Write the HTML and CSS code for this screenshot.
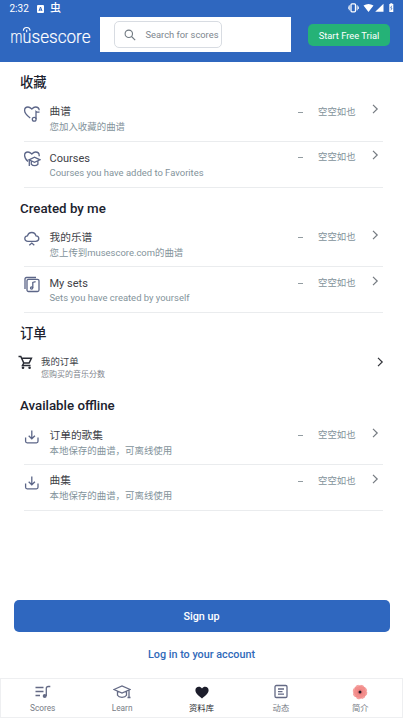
FILE: index.html
```html
<!DOCTYPE html>
<html lang="zh">
<head>
<meta charset="utf-8">
<meta name="viewport" content="width=device-width">
<title>Library</title>
<link rel="stylesheet" href="styles.css">
</head>
<body>
<svg class="defs" width="0" height="0">
  <defs>
    <symbol id="chev" viewBox="0 0 8 12"><path d="M2 1.800 6.200 6 2 10.200"/></symbol>
    <symbol id="heart-note" viewBox="0 0 18 18"><path d="M7.200 12.900C3.800 10.400 1.600 8 1.600 5.400 1.600 3.300 3 2 5 2c1.700 0 2.700 1 3.800 2C10 2.800 11 2 12.500 2c2 0 3.600 1.200 3.700 3.200M13 14V6.400c1 .8 2.200 1 3.500.5"/><circle cx="11.200" cy="14.200" r="1.900"/></symbol>
    <symbol id="heart-cap" viewBox="0 0 18 18"><path d="M5 11.500C3 9.600 1.600 7.700 1.600 5.400 1.600 3.300 3 2 5 2c1.700 0 2.700 1 3.800 2C10 2.800 11 2 12.500 2c2 0 3.700 1.300 3.700 3.400v.8M6 9.800l5.500-2.600L17 9.800l-5.500 2.500zM8.300 11v3.200c1.800 2 4.800 2 6.600 0V11M6.300 10v6"/></symbol>
    <symbol id="cloud" viewBox="0 0 18 18"><path d="M5 11.400c-2 0-3.200-1.200-3.200-2.800s1.100-2.600 2.700-2.700C5 3.800 6.700 2.500 8.800 2.500s3.700 1.300 4.200 3.400c1.700.1 2.800 1.200 2.800 2.700 0 1.600-1.200 2.800-3.200 2.800zM6.300 15.300l2.500-2.200 2.500 2.200"/></symbol>
    <symbol id="sets" viewBox="0 0 18 18"><rect x="4" y="3.300" width="12" height="12.200" rx="1.500"/><path d="M2 13V3q0-1.500 1.500-1.500H13M9.800 12V6.500l2.800-.8"/><circle cx="8.600" cy="12" r="1.100"/></symbol>
    <symbol id="download" viewBox="0 0 18 18"><path d="M2.600 9.500v3.800q0 1.500 1.500 1.500h9.400q1.500 0 1.500-1.500V9.500M8.800 2.500v8M5.700 7.800l3.100 3 3.100-3"/></symbol>
  </defs>
</svg>

<header class="top">
  <div class="status">
    <span class="clock">2:32</span>
    <svg class="st-a" width="7" height="8" viewBox="0 0 7 8"><rect width="7" height="8" rx="1" fill="#fff"/><path d="M2 6 3.500 2 5 6M2.500 5h2" stroke="#2f67bf" fill="none"/></svg>
    <span class="st-cjk">虫</span>
    <svg class="st-right" width="46" height="10" viewBox="0 0 46 10" fill="#fff">
      <rect x="3" y=".8" width="4.500" height="8" rx="1" fill="none" stroke="#fff" stroke-width="1.300"/>
      <path d="M1.300 2.300v5M9.200 2.300v5M.2 3.500v2.500M10.400 3.500v2.500" stroke="#fff" stroke-width=".9"/>
      <path d="M15.500 2.600q5-3.200 10 0l-5 6.400zM35.500.8v8h-8.300zM41.300 1h1v-.8h2V1h1v8h-4z"/>
      <path d="M43.800 2.700l-1.200 2.300h1.400l-1.100 2.300" stroke="#2f67bf" stroke-width=".7" fill="none"/>
    </svg>
  </div>
  <div class="bar">
    <svg class="logo" width="82" height="28" viewBox="0 0 82 28">
      <text y="18.500"><tspan x="-.5" textLength="11.800" lengthAdjust="spacingAndGlyphs">m</tspan><tspan x="11.400" textLength="8.800" lengthAdjust="spacingAndGlyphs">u</tspan><tspan x="20.500" textLength="59" lengthAdjust="spacingAndGlyphs">sescore</tspan></text>
      <path d="M12.400 6.800a3.300 3.300 0 0 1 6.600 0M15.700 5.800v2.400"/>
    </svg>
    <div class="search-wrap">
      <div class="search">
        <svg width="12" height="12" viewBox="0 0 12 12"><circle cx="4.800" cy="4.800" r="3.700"/><path d="m7.500 7.500 3.700 3.700"/></svg>
        <span>Search for scores</span>
      </div>
    </div>
    <button class="trial">Start Free Trial</button>
  </div>
</header>

<main>
  <section>
    <h2 class="cjk">收藏</h2>
    <div class="row">
      <svg class="ico"><use href="#heart-note"/></svg>
      <div class="txt"><div class="name">曲谱</div><div class="sub">您加入收藏的曲谱</div></div>
      <span class="dash"></span><span class="empty">空空如也</span><svg class="chev"><use href="#chev"/></svg>
    </div>
    <div class="row">
      <svg class="ico"><use href="#heart-cap"/></svg>
      <div class="txt"><div class="name en">Courses</div><div class="sub en">Courses you have added to Favorites</div></div>
      <span class="dash"></span><span class="empty">空空如也</span><svg class="chev"><use href="#chev"/></svg>
    </div>
  </section>
  <section>
    <h2>Created by me</h2>
    <div class="row">
      <svg class="ico"><use href="#cloud"/></svg>
      <div class="txt"><div class="name">我的乐谱</div><div class="sub">您上传到musescore.com的曲谱</div></div>
      <span class="dash"></span><span class="empty">空空如也</span><svg class="chev"><use href="#chev"/></svg>
    </div>
    <div class="row">
      <svg class="ico"><use href="#sets"/></svg>
      <div class="txt"><div class="name en">My sets</div><div class="sub en">Sets you have created by yourself</div></div>
      <span class="dash"></span><span class="empty">空空如也</span><svg class="chev"><use href="#chev"/></svg>
    </div>
  </section>
  <section class="orders">
    <h2 class="cjk">订单</h2>
    <div class="order">
      <svg class="cart" width="15" height="15" viewBox="0 0 15 15"><path d="M.5 1.500h2.300l3 6.500h5.300l2.300-4.800H3.700M5.800 8l-1.300 2.400h8"/><circle cx="5" cy="12.800" r="1.300"/><circle cx="11.600" cy="12.800" r="1.300"/></svg>
      <div class="txt"><div class="oname">我的订单</div><div class="osub">您购买的音乐分数</div></div>
      <svg class="chev dark"><use href="#chev"/></svg>
    </div>
  </section>
  <section>
    <h2 class="offline">Available offline</h2>
    <div class="row">
      <svg class="ico"><use href="#download"/></svg>
      <div class="txt"><div class="name">订单的歌集</div><div class="sub">本地保存的曲谱，可离线使用</div></div>
      <span class="dash"></span><span class="empty">空空如也</span><svg class="chev"><use href="#chev"/></svg>
    </div>
    <div class="row">
      <svg class="ico"><use href="#download"/></svg>
      <div class="txt"><div class="name">曲集</div><div class="sub">本地保存的曲谱，可离线使用</div></div>
      <span class="dash"></span><span class="empty">空空如也</span><svg class="chev"><use href="#chev"/></svg>
    </div>
  </section>
</main>

<footer>
  <button class="signup">Sign up</button>
  <a class="login">Log in to your account</a>
  <nav>
    <div class="tab"><svg viewBox="0 0 18 16"><path d="M1.500 3.500h8M1.500 7.500h8M1.500 11.500H6M12.300 12V4.500q0-2 2-2h2"/><circle class="fill" cx="10.700" cy="12" r="2"/></svg><span>Scores</span></div>
    <div class="tab"><svg viewBox="0 0 18 16"><path d="M1 5.500 9 2l8 3.500L9 9zM4.500 7.300v4c1.500 2.700 7.500 2.700 9 0v-4M16 6v7.500M14.500 13.500h3"/></svg><span>Learn</span></div>
    <div class="tab active"><svg viewBox="0 0 18 16"><path d="M9 14.500C5 11.200 2.400 9 2.400 6.200 2.400 4.200 3.900 2.700 5.800 2.700c1.300 0 2.500.6 3.200 1.700.7-1.100 1.900-1.700 3.200-1.700 1.900 0 3.400 1.500 3.400 3.500 0 2.800-2.600 5-6.600 8.300z"/></svg><span>资料库</span></div>
    <div class="tab"><svg viewBox="0 0 18 16"><rect x="3" y="1.500" width="12" height="12" rx="1.300"/><path d="M6 5h6M6 7.600h4.500M6 10.200h6"/></svg><span>动态</span></div>
    <div class="tab"><svg class="flower" viewBox="0 0 18 16"><circle cx="9" cy="8" r="6.800" fill="#f28d8b"/><circle cx="9" cy="8" r="6.500" fill="none" stroke="#f5a09e" stroke-width="1.600" stroke-dasharray="3 2.100"/><circle cx="9" cy="8" r="3" fill="#ee8081"/><circle cx="9" cy="8" r="1.500" fill="#251c2a"/></svg><span>简介</span></div>
  </nav>
</footer>
</body>
</html>
```
FILE: styles.css
```css
* { box-sizing: border-box; }
body {
  margin: 0;
  width: 403px;
  height: 718px;
  display: flex;
  flex-direction: column;
  overflow: hidden;
  background: #fff;
  font-family: Roboto, "Noto Sans CJK SC", sans-serif;
}
.defs { display: block; flex: none; }
button { border: 0; padding: 0; font-family: inherit; }
svg { display: block; flex: none; }

.top { height: 62px; background: #2f67bf; color: #fff; flex: none; }
.status { height: 17px; display: flex; align-items: center; padding: 0 9px 0 9.500px; }
.clock { font-size: 10px; line-height: 17px; width: 27.500px; }
.st-cjk { font-size: 11px; line-height: 17px; margin-left: 6px; font-weight: 500; }
.st-right { margin-left: auto; margin-top: -2px; }
.bar { display: flex; align-items: flex-start; }
.logo { margin: 7px 7px 0 11px; overflow: visible; }
.logo text { font-family: Roboto, sans-serif; font-weight: 300; font-size: 18px; fill: #fff; stroke: #fff; stroke-width: .15; }
.logo path { fill: none; stroke: #fff; stroke-width: 1.2; }
.search-wrap { width: 191px; height: 35px; background: #fff; padding: 4px 0 0 14px; }
.search {
  width: 108px; height: 27px;
  border: 1px solid #d8dce2; border-radius: 5px;
  display: flex; align-items: center; gap: 10px;
  padding-left: 8.500px;
  font-size: 9.350px; color: #7d868e; white-space: nowrap;
}
.search svg { fill: none; stroke: #707980; stroke-width: 1.1; }
.trial {
  margin: 7px 0 0 17px; width: 82px; height: 22px;
  border-radius: 5px; background: #25b277; color: #fff; font-size: 9.350px;
}

main { flex: 1; padding-top: 7px; }
h2 {
  margin: 0; padding-left: 20px; height: 34px; line-height: 42px;
  font-size: 13.300px; font-weight: 500; color: #20222e;
}
h2.offline { line-height: 40px; }
section:first-child h2 { height: 27px; line-height: 28px; }
.row {
  display: flex; align-items: flex-start;
  height: 45.800px; margin: 0 20px 0 24px;
  border-bottom: 1px solid #eaecee;
}
.ico { width: 18px; height: 18px; margin: 8.500px 8.500px 0 -1px; fill: none; stroke: #5c6688; stroke-width: 1.3; }
.txt { flex: 1; white-space: nowrap; }
.name { margin-top: 8px; height: 16px; line-height: 16px; font-size: 10.700px; color: #3e4147; }
.name.en { font-size: 11px; line-height: 17px; }
.sub { height: 15px; line-height: 14px; font-size: 9.450px; color: #83939b; }
.dash { width: 5px; height: 1px; margin: 15.500px 15px 0 0; background: #929ca1; }
.empty { width: 38px; line-height: 15px; margin-top: 7.500px; font-size: 9.400px; color: #83939b; white-space: nowrap; }
.chev { width: 8px; height: 12px; margin: 7.400px 4px 0 15px; fill: none; stroke: #747a80; stroke-width: 1.2; }
.orders { height: 72.500px; }
.orders h2 { height: 40px; line-height: 42px; }
.order { display: flex; height: 32px; padding: 0 19px 0 18px; }
.cart { margin: 2px 8px 0 0; fill: none; stroke: #292c35; stroke-width: 1.5; }
.cart circle { fill: #292c35; stroke: none; }
.oname { margin-top: 1.500px; height: 14px; line-height: 14px; font-size: 9.400px; color: #41444b; }
.osub { height: 11px; line-height: 11px; font-size: 8px; color: #81858d; }
.chev.dark { margin: 2.500px 0 0; stroke: #303238; }

footer { flex: none; display: flex; flex-direction: column; align-items: center; }
.signup {
  width: 376px; height: 32.500px; border-radius: 5px; padding-top: 1.500px;
  background: #2f67bf; color: #fff; font-size: 10.800px; font-weight: 500;
}
.login { margin-top: 14px; height: 32px; line-height: 17px; font-size: 10.800px; font-weight: 500; color: #3069b9; }
nav {
  width: 403px; height: 40px; border: 1px solid #eeeff1;
  display: flex; padding: 0 2px;
}
.tab { flex: 1; display: flex; flex-direction: column; align-items: center; padding-top: 5px; font-size: 8.300px; color: #777c86; }
.tab svg { width: 18px; height: 16px; fill: none; stroke: #646a85; stroke-width: 1.3; }
.tab .fill { fill: #646a85; stroke: none; }
.tab span { line-height: 12px; margin-top: 2px; }
.tab.active { color: #282a32; }
.tab.active svg { fill: #1c1d2b; stroke: none; }
.tab .flower { stroke: none; }
```
